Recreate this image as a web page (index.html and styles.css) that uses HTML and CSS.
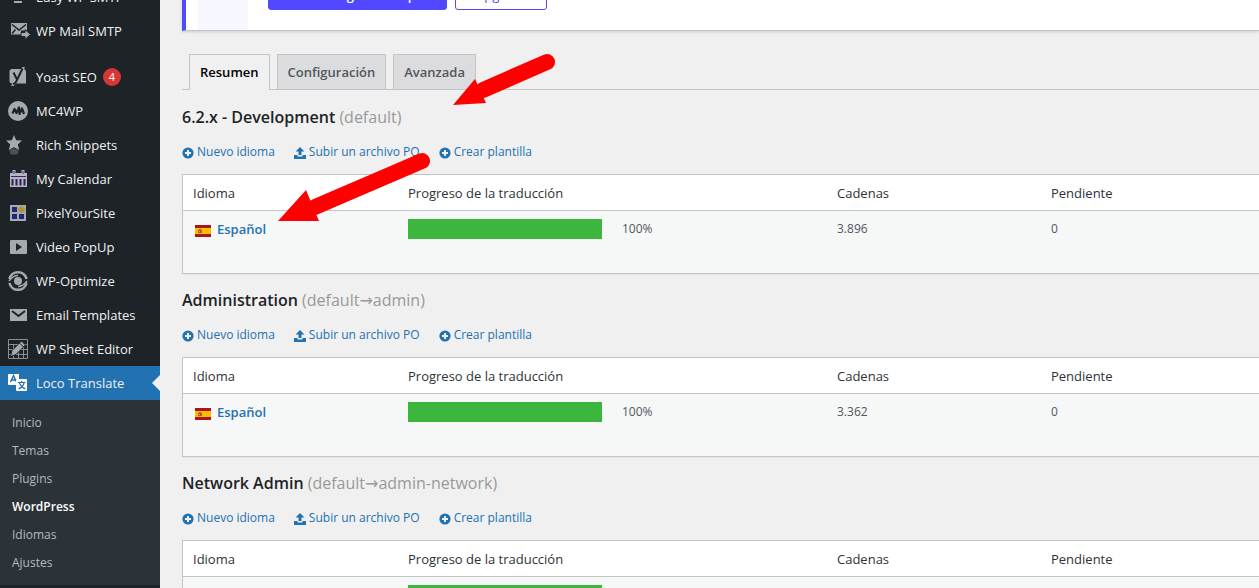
FILE: index.html
```html
<!DOCTYPE html>
<html lang="es">
<head>
    <meta charset="UTF-8">
    <meta name="viewport" content="width=device-width, initial-scale=1.0">
    <title>Loco Translate - WordPress</title>
    <link rel="stylesheet" href="styles.css">
</head>
<body>
    <svg class="symbols" aria-hidden="true">
        <symbol id="icon-plus" viewBox="0 0 12 12">
            <circle cx="6" cy="6" r="5.6"/>
            <path d="M6 3v6M3 6h6" stroke="#f0f0f0" stroke-width="2"/>
        </symbol>
        <symbol id="icon-upload" viewBox="0 0 12 12">
            <path d="M6 0L10.500 4.500H7.500V8h-3V4.500h-3z"/>
            <path d="M0 8h3.500v1.500h5V8H12v4H0z"/>
        </symbol>
        <symbol id="flag-es" viewBox="0 0 16 12">
            <path fill="#ad1519" d="M0 0h16v12H0z"/>
            <path fill="#fabd00" d="M0 3h16v6H0z"/>
            <path fill="#b0602b" d="M3 5h1v-1h2v1h1v3H3z"/>
            <path fill="#e5a87c" d="M4 6h1v1H4z"/>
        </symbol>
    </svg>

    <div class="wrap">
        <nav class="sidebar">
            <ul class="menu">
                <li><a href="#">
                    <svg viewBox="0 0 20 20"><path d="M4 5h12v3H4zM6 14h8v2H6z"/></svg>
                    Easy WP SMTP</a></li>
                <li><a href="#">
                    <svg viewBox="0 0 20 20">
                        <path d="M3 2h16v7.500h-6v4H3z"/>
                        <path d="M4 3.500l7 5.500 7-5.500M4 12.500l3.500-4" fill="none" stroke="#1d2327" stroke-width="1.500"/>
                        <path d="M13 11.500h4v-3l5.500 5-5.500 5v-3h-4z" stroke="#1d2327"/>
                    </svg>
                    WP Mail SMTP</a></li>
                <li class="separator"></li>
                <li><a href="#">
                    <svg viewBox="0 0 20 20">
                        <path d="M4 2h9l1.500-2H17l-1 2q2 .5 2 3v11.500H8L5.500 19H3l1.500-2.500Q1.500 16.500 1.500 14V5Q1.500 2 4 2z"/>
                        <path d="M5.500 5.500l3.500 7M14.500 1.500L9 13q-1.500 4-4 4" fill="none" stroke="#1d2327" stroke-width="2"/>
                    </svg>
                    Yoast SEO <span class="count">4</span></a></li>
                <li><a href="#">
                    <svg viewBox="0 0 20 20">
                        <circle cx="10" cy="10" r="10"/>
                        <path d="M4.500 12.500L6.500 8l2 4 2.500-5.500.5 6.500L14 7.500l2 5.500" fill="none" stroke="#1d2327" stroke-width="2.200" stroke-linejoin="round"/>
                    </svg>
                    MC4WP</a></li>
                <li><a href="#">
                    <svg viewBox="0 0 20 20">
                        <path d="M6 0l2.200 5.200 5.800.4-4.200 3.900 1.400 5.500L6 12.300.8 15l1.400-5.500L-2 5.600l5.800-.4z"/>
                        <path d="M1.500 15.500q4.500-4 9 0l-1 4h-7z" opacity=".35"/>
                    </svg>
                    Rich Snippets</a></li>
                <li><a href="#">
                    <svg viewBox="0 0 20 20">
                        <path d="M2 4h17v14H2z" fill="#b9b3c6"/>
                        <path d="M6 1v5M15 1v5" stroke="#b9b3c6" stroke-width="3"/>
                        <path d="M6 2v3M15 2v3" stroke="#3a2a6c"/>
                        <path d="M3 7.500h15" stroke="#3a2a5c"/>
                        <path d="M4.500 10v6.500M8.500 10v6.500M12.500 10v6.500M16.500 10v6.500" stroke="#2b2550" stroke-width="2"/>
                    </svg>
                    My Calendar</a></li>
                <li><a href="#">
                    <svg viewBox="0 0 20 20">
                        <path d="M2 2h16v16H2z"/>
                        <path fill="#20247c" d="M4 4h5v5H4zM4 11h5v5H4zM11 11h5v5h-5z"/>
                        <path fill="#b29235" d="M13.500 2.500l4 4-4 4-4-4z"/>
                    </svg>
                    PixelYourSite</a></li>
                <li><a href="#">
                    <svg viewBox="0 0 20 20">
                        <rect x="2" y="3" width="17" height="14" rx="1"/>
                        <path fill="#1d2327" d="M8 6l6 4-6 4z"/>
                    </svg>
                    Video PopUp</a></li>
                <li><a href="#">
                    <svg viewBox="0 0 20 20">
                        <path d="M1.500 8A8.700 8.700 0 0 1 18.500 8M1.500 12A8.700 8.700 0 0 0 18.500 12" fill="none" stroke="#a7aaad" stroke-width="2.500"/>
                        <path d="M1 10q4-5.500 9-5.500M19 10q-4 5.500-9 5.500" fill="none" stroke="#a7aaad" stroke-width="1.500"/>
                        <circle cx="10" cy="10" r="4"/>
                    </svg>
                    WP-Optimize</a></li>
                <li><a href="#">
                    <svg viewBox="0 0 20 20">
                        <path d="M2 4h17v12H2z"/>
                        <path d="M4 6l6.500 5L17 6" fill="none" stroke="#1d2327" stroke-width="2"/>
                    </svg>
                    Email Templates</a></li>
                <li><a href="#">
                    <svg viewBox="0 0 20 20">
                        <path d="M.5.5h19v19H.5zM0 5.500h20M0 10.500h20M0 15.500h20M5.500 5v15M10.500 5v15M15.500 5v15" fill="none" stroke="#8b8e91"/>
                        <path d="M2.500 17.500l1.500-6L13.500 2l4 4L8 15.500z" stroke="#1d2327"/>
                        <path d="M11.500 4l4 4" stroke="#1d2327"/>
                    </svg>
                    WP Sheet Editor</a></li>
                <li class="current"><a href="#">
                    <svg viewBox="0 0 20 20">
                        <path d="M1 1h10v5H8v6H1q-1 0-1-1V2q0-1 1-1z"/>
                        <path d="M2.500 9l3-6.500 2.500 6M4 7h4" fill="none" stroke="#2271b1" stroke-width="1.500"/>
                        <rect x="8" y="6" width="11" height="12" rx="1"/>
                        <path d="M10 9.500h7.500M13.700 8v2M16 10q-1 4-5.500 6M11.500 10q1.500 4 6 6" fill="none" stroke="#2271b1" stroke-width="1.200"/>
                    </svg>
                    Loco Translate</a></li>
            </ul>
            <ul class="submenu">
                <li><a href="#">Inicio</a></li>
                <li><a href="#">Temas</a></li>
                <li><a href="#">Plugins</a></li>
                <li><a href="#" class="active">WordPress</a></li>
                <li><a href="#">Idiomas</a></li>
                <li><a href="#">Ajustes</a></li>
            </ul>
        </nav>

        <main class="content">
            <div class="notice">
                <div class="notice-logo"></div>
                <button class="btn btn-primary">Activar carga más rápida</button>
                <button class="btn">Upgrade</button>
            </div>

            <nav class="tabs">
                <a href="#" class="tab tab-active">Resumen</a>
                <a href="#" class="tab">Configuración</a>
                <a href="#" class="tab">Avanzada</a>
            </nav>

            <section class="project">
                <h2>6.2.x - Development <span>(default)</span></h2>
                <div class="actions">
                    <a href="#"><svg><use href="#icon-plus"/></svg>Nuevo idioma</a>
                    <a href="#"><svg><use href="#icon-upload"/></svg>Subir un archivo PO</a>
                    <a href="#"><svg><use href="#icon-plus"/></svg>Crear plantilla</a>
                </div>
                <table>
                    <thead>
                        <tr>
                            <th class="col-lang">Idioma</th>
                            <th class="col-progress">Progreso de la traducción</th>
                            <th class="col-strings">Cadenas</th>
                            <th>Pendiente</th>
                        </tr>
                    </thead>
                    <tbody>
                        <tr>
                            <td><a href="#" class="lang"><svg><use href="#flag-es"/></svg>Español</a></td>
                            <td><div class="progress"><div class="bar"></div>100%</div></td>
                            <td>3.896</td>
                            <td>0</td>
                        </tr>
                    </tbody>
                </table>
            </section>

            <section class="project">
                <h2>Administration <span>(default→admin)</span></h2>
                <div class="actions">
                    <a href="#"><svg><use href="#icon-plus"/></svg>Nuevo idioma</a>
                    <a href="#"><svg><use href="#icon-upload"/></svg>Subir un archivo PO</a>
                    <a href="#"><svg><use href="#icon-plus"/></svg>Crear plantilla</a>
                </div>
                <table>
                    <thead>
                        <tr>
                            <th class="col-lang">Idioma</th>
                            <th class="col-progress">Progreso de la traducción</th>
                            <th class="col-strings">Cadenas</th>
                            <th>Pendiente</th>
                        </tr>
                    </thead>
                    <tbody>
                        <tr>
                            <td><a href="#" class="lang"><svg><use href="#flag-es"/></svg>Español</a></td>
                            <td><div class="progress"><div class="bar"></div>100%</div></td>
                            <td>3.362</td>
                            <td>0</td>
                        </tr>
                    </tbody>
                </table>
            </section>

            <section class="project">
                <h2>Network Admin <span>(default→admin-network)</span></h2>
                <div class="actions">
                    <a href="#"><svg><use href="#icon-plus"/></svg>Nuevo idioma</a>
                    <a href="#"><svg><use href="#icon-upload"/></svg>Subir un archivo PO</a>
                    <a href="#"><svg><use href="#icon-plus"/></svg>Crear plantilla</a>
                </div>
                <table>
                    <thead>
                        <tr>
                            <th class="col-lang">Idioma</th>
                            <th class="col-progress">Progreso de la traducción</th>
                            <th class="col-strings">Cadenas</th>
                            <th>Pendiente</th>
                        </tr>
                    </thead>
                    <tbody>
                        <tr>
                            <td></td>
                            <td><div class="progress"><div class="bar"></div></div></td>
                            <td></td>
                            <td></td>
                        </tr>
                    </tbody>
                </table>
            </section>

            <!-- arrows pointing at the tabs and the first language -->
            <svg class="arrows" viewBox="0 0 300 180" aria-hidden="true">
                <path d="M206 50L270 22M38 167L145 121" stroke="#f00" stroke-width="16" stroke-linecap="round"/>
                <path d="M176 65L198 39L209 63zM1 181L29 150L42 181z" fill="#f00"/>
            </svg>
        </main>
    </div>
</body>
</html>
```

FILE: styles.css
```css
* {
    box-sizing: border-box;
}

body, h2, ul {
    margin: 0;
    padding: 0;
}

body {
    font-family: 'Open Sans', 'DejaVu Sans', sans-serif;
    font-size: 13px;
    background-color: #f0f0f0;
    color: #3c434a;
}

a {
    color: #2271b1;
    text-decoration: none;
}

ul {
    list-style: none;
}

.symbols {
    display: none;
}

.wrap {
    display: flex;
    height: 100vh;
    overflow: hidden;
}

/* sidebar */
.sidebar {
    flex: 0 0 160px;
    background-color: #1d2327;
}

.menu {
    margin-top: -20px;
}

.menu a {
    display: flex;
    align-items: center;
    height: 34px;
    padding-left: 8px;
    color: #f0f0f1;
}

.menu svg {
    width: 20px;
    height: 20px;
    margin-right: 8px;
    fill: #a7aaad;
    overflow: visible;
}

.menu .separator {
    height: 12px;
}

.count {
    width: 18px;
    margin-left: 6px;
    border-radius: 9px;
    background-color: #d63638;
    color: #ffffff;
    font-size: 11px;
    line-height: 18px;
    text-align: center;
}

.menu .current {
    position: relative;
    background-color: #2271b1;
}

.menu .current svg {
    fill: #ffffff;
}

.menu .current::after {
    content: "";
    position: absolute;
    top: 9px;
    right: 0;
    border: 8px solid transparent;
    border-left: 0;
    border-right-color: #f0f0f0;
}

.submenu {
    padding: 9px 0 8px;
    background-color: #2c3338;
}

.submenu a {
    display: block;
    padding-left: 12px;
    color: #b4b9be;
    font-size: 12px;
    line-height: 28px;
}

.submenu .active {
    color: #ffffff;
    font-weight: 600;
}

/* content */
.content {
    position: relative;
    flex: 1;
    min-width: 0;
    padding-left: 22px;
}

.notice {
    display: flex;
    gap: 8px;
    height: 51px;
    margin-top: -20px;
    padding-left: 12px;
    border-left: 4px solid #5148ff;
    border-bottom: 1px solid #c3c4c7;
    background-color: #ffffff;
    box-shadow: 0 1px 3px rgba(0, 0, 0, 0.15);
}

.notice-logo {
    width: 50px;
    margin-right: 12px;
    background-color: #f6f7ff;
}

.btn {
    width: 92px;
    height: 30px;
    padding: 0;
    border: 1px solid #5148ff;
    border-radius: 3px;
    background-color: #ffffff;
    color: #5148ff;
    font-family: inherit;
    font-size: 13px;
}

.btn-primary {
    width: 179px;
    background-color: #5148ff;
    color: #ffffff;
    font-weight: 600;
}

.tabs {
    display: flex;
    gap: 7px;
    margin: 23px 0 15px;
    padding-left: 7px;
    border-bottom: 1px solid #c3c4c7;
}

.tab {
    padding: 0 10px;
    border: 1px solid #c3c4c7;
    border-bottom: 0;
    background-color: #dcdcde;
    color: #50575e;
    font-weight: 600;
    line-height: 34px;
}

.tab-active {
    margin-bottom: -1px;
    background-color: #f0f0f0;
    color: #000000;
}

.project {
    margin-bottom: 14px;
}

h2 {
    margin-bottom: 13px;
    color: #1d2327;
    font-size: 16px;
    font-weight: 600;
    line-height: 24px;
}

h2 span {
    color: #999999;
    font-weight: 400;
}

.actions {
    display: flex;
    gap: 19px;
    margin-bottom: 12px;
    font-size: 12px;
    line-height: 20px;
}

.actions svg {
    width: 12px;
    height: 12px;
    margin-right: 3px;
    fill: #2271b1;
    vertical-align: -3px;
}

table {
    width: 100%;
    table-layout: fixed;
    border: 1px solid #c3c4c7;
    border-right: 0;
    border-spacing: 0;
    background-color: #ffffff;
    box-shadow: 0 1px 1px rgba(0, 0, 0, 0.04);
}

th, td {
    padding: 8px 10px;
    text-align: left;
}

th {
    height: 36px;
    padding: 0 10px;
    border-bottom: 1px solid #c3c4c7;
    color: #2c3338;
    font-weight: 400;
}

td {
    height: 62px;
    background-color: #f6f7f7;
    color: #50575e;
    font-size: 12px;
    line-height: 20px;
    vertical-align: top;
}

.col-lang {
    width: 215px;
}

.col-progress {
    width: 429px;
}

.col-strings {
    width: 214px;
}

.lang {
    font-size: 13px;
    font-weight: 600;
}

.lang svg {
    width: 16px;
    height: 12px;
    margin: 0 6px 0 2px;
    vertical-align: -3px;
}

.progress {
    display: flex;
    gap: 20px;
}

.bar {
    width: 194px;
    height: 20px;
    background-color: #3db63d;
}

.arrows {
    position: absolute;
    top: 40px;
    left: 117px;
    width: 300px;
    height: 180px;
    overflow: visible;
    pointer-events: none;
}
```
